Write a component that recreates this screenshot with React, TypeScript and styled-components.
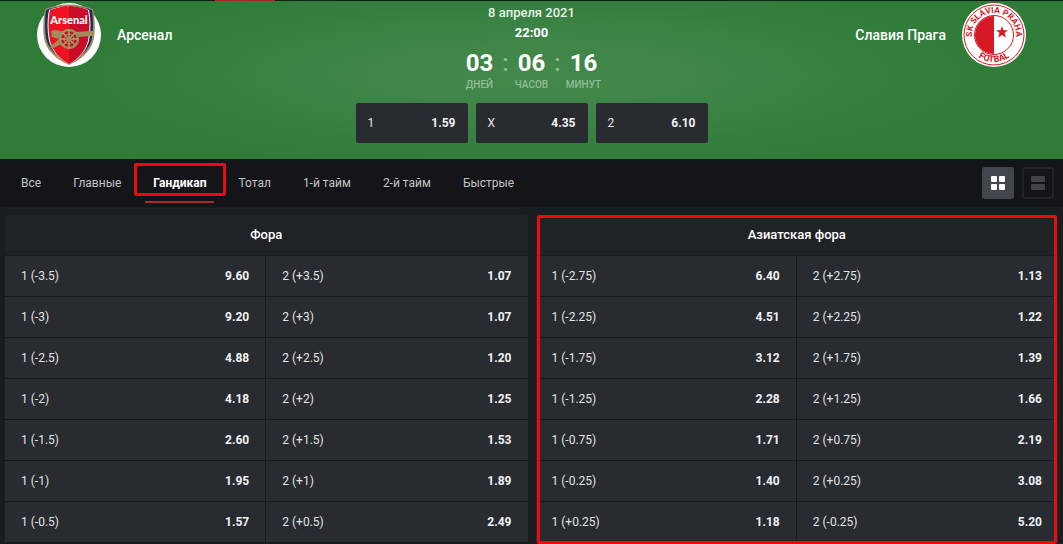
import React from "react";
import styled, { createGlobalStyle } from "styled-components";

const GlobalStyle = createGlobalStyle`
  *, *::before, *::after { box-sizing: border-box; }
  body {
    margin: 0;
    background: #1a1d20;
    color: #fff;
    font-family: Roboto, "Noto Sans", sans-serif;
    font-size: 13px;
    line-height: 20px;
  }
  button { font: inherit; color: inherit; cursor: pointer; border: 0; padding: 0; }
`;

const Page = styled.div`
  min-height: 100vh;
  overflow: hidden;
`;

const TopStrip = styled.div`
  height: 1px;
  padding-left: 215px;
  background: #0b2010;
`;

const TopMarker = styled.div`
  width: 60px;
  height: 1px;
  background: #a3282a;
`;

const Hero = styled.header`
  display: grid;
  grid-template-columns: 1fr 352px 1fr;
  height: 158px;
  padding: 0 37px;
  background: radial-gradient(ellipse 46% 62% at 50% 47%, #44894c 0%, #3c8445 45%, #2f7b38 100%);
`;

const Team = styled.div<{ $away?: boolean }>`
  display: flex;
  flex-direction: ${(p) => (p.$away ? "row-reverse" : "row")};
  align-items: center;
  align-self: start;
  gap: 16px;
  padding-top: 2px;
  font-size: 14px;
  font-weight: 500;
`;

const Crest = styled.svg`
  display: block;
  width: 64px;
  height: 64px;
`;

const MatchInfo = styled.div`
  display: flex;
  flex-direction: column;
  align-items: center;
  padding-top: 2px;
  font-weight: 500;
`;

const MatchDate = styled.time`
  color: #e9f3ea;
`;

const MatchTime = styled.time`
  font-weight: 700;
`;

const Countdown = styled.div`
  display: flex;
  margin-top: 6px;
`;

const Unit = styled.div`
  display: flex;
  flex-direction: column;
  align-items: center;
  width: 40px;
`;

const UnitValue = styled.span`
  font-size: 24px;
  line-height: 28px;
  font-weight: 700;
`;

const UnitLabel = styled.span`
  font-size: 10px;
  line-height: 16px;
  color: #92bd97;
`;

const Colon = styled.span`
  width: 12px;
  text-align: center;
  font-size: 24px;
  line-height: 28px;
  color: #92bd97;
`;

const Outcomes = styled.div`
  display: grid;
  grid-template-columns: repeat(3, 1fr);
  gap: 8px;
  width: 100%;
  margin-top: 10px;
`;

const OutcomeButton = styled.button`
  display: flex;
  align-items: center;
  justify-content: space-between;
  height: 40px;
  padding: 0 12px;
  border-radius: 2px;
  background: #282b30;
  font-size: 12px;
`;

const OddName = styled.span`
  font-weight: 400;
  color: #e2e4e6;
`;

const OddValue = styled.span`
  font-weight: 700;
  color: #f1f2f3;
`;

const Toolbar = styled.div`
  display: flex;
  align-items: center;
  justify-content: space-between;
  height: 48px;
  padding: 0 9px 0 13px;
  background: #141519;
`;

const Tabs = styled.nav`
  display: flex;
  align-self: stretch;
  gap: 16px;
`;

const Tab = styled.button<{ $active?: boolean }>`
  position: relative;
  padding: 6px 8px 0;
  background: none;
  border-bottom: 2px solid ${(p) => (p.$active ? "#b0282f" : "transparent")};
  margin-bottom: 4px;
  color: ${(p) => (p.$active ? "#fff" : "#c2c4c6")};
  font-size: 12px;
  font-weight: ${(p) => (p.$active ? 700 : 400)};
`;

const Highlight = styled.span`
  position: absolute;
  z-index: 1;
  border: 3px solid #ea0a0f;
  border-radius: 2px;
  pointer-events: none;
`;

const TabHighlight = styled(Highlight)`
  inset: 4px -12px 5px -11px;
`;

const PanelHighlight = styled(Highlight)`
  inset: 0 1px -2px 1px;
`;

const Views = styled.div`
  display: flex;
  gap: 8px;
`;

const ViewButton = styled.button<{ $active?: boolean }>`
  display: grid;
  place-items: center;
  width: 32px;
  height: 32px;
  border: 2px solid ${(p) => (p.$active ? "#42474e" : "#202327")};
  border-radius: 3px;
  background: ${(p) => (p.$active ? "#42474e" : "transparent")};
  color: ${(p) => (p.$active ? "#fff" : "#3f444a")};
`;

const Markets = styled.main`
  display: grid;
  grid-template-columns: 1fr 1fr;
  gap: 8px;
  padding: 8px 5px 0;
`;

const Panel = styled.section`
  position: relative;
  border-radius: 4px 4px 0 0;
  background: #202326;
`;

const OddsTable = styled.table`
  width: 100%;
  table-layout: fixed;
  border-collapse: separate;
  border-spacing: 0;
`;

const MarketTitle = styled.th`
  height: 40px;
  padding: 0;
  font-size: 13px;
  font-weight: 500;
  text-align: center;
`;

const OddCell = styled.td`
  height: 41px;
  padding: 0;
  border-top: 1px solid #191b1e;
  background: #282b2f;

  &:first-child { border-right: 1px solid #191b1e; }
`;

const OddButton = styled.button`
  display: flex;
  align-items: center;
  justify-content: space-between;
  width: 100%;
  height: 40px;
  padding: 0 16px;
  background: none;
  font-size: 12px;
`;

const ArsenalCrest = () => (
  <Crest viewBox="0 0 64 64" role="img" aria-label="Arsenal">
    <circle cx="32" cy="32" r="32" fill="#fff" />
    <path d="M8 6Q31-3 56 6Q59 21 57 35Q54 52 32 62Q10 52 7 35Q5 21 8 6Z" fill="#a38b5b" />
    <path d="M9 7Q31-1 55 7Q57 22 55 35Q52 50 32 60Q12 50 9 35Q7 21 9 7Z" fill="#17305f" />
    <path d="M12 7Q32-1 52 7Q55 22 52 38Q48 53 32 61Q16 53 12 38Q9 22 12 7Z" fill="#fff" />
    <path d="M13 7Q32 1 32 4V61Q17 53 13 38Q10 22 13 7Z" fill="#ed1220" />
    <path d="M32 3Q41 3 51 7Q54 22 51 38Q47 53 32 61Z" fill="#c90d28" />
    <text x="32" y="21" textAnchor="middle" fontFamily="Lato" fontWeight="900" fontSize="11" fill="#fff">Arsenal</text>
    <path d="M14 28Q18 26 23 28L36 29L55 28L57 27V34L55 33L40 34L24 41L15 46L13 44L22 36L15 34Z" fill="#a38b5b" />
    <circle cx="32" cy="36" r="9" fill="#c11426" stroke="#a38b5b" strokeWidth="2.4" />
    <circle cx="32" cy="36" r="5" fill="none" stroke="#a38b5b" strokeWidth="1" />
    <path d="M32 27V45M23 36H41M26 30L38 42M38 30L26 42" stroke="#b5a077" strokeWidth="1.4" />
    <circle cx="32" cy="36" r="2.3" fill="#a38b5b" />
  </Crest>
);

const SlaviaCrest = () => (
  <Crest viewBox="0 0 64 64" role="img" aria-label="SK Slavia Praha Fotbal">
    <defs>
      <path id="slavia-top" d="M15.9 47A22 22 0 1 1 48.1 47" />
      <path id="slavia-bottom" d="M8.9 46A27 27 0 0 0 55.1 46" />
    </defs>
    <circle cx="32" cy="32" r="32" fill="#fff" />
    <circle cx="32" cy="32" r="30" fill="none" stroke="#d51a25" strokeWidth="1" />
    <circle cx="32" cy="32" r="19.5" fill="#fff" stroke="#d51a25" strokeWidth="1" />
    <path d="M32 13A19 19 0 0 0 32 51Z" fill="#d51a25" />
    <path d="M40 23L41.5 27.2L46 27.2L42.5 30L43.8 34.5L40 32L36.2 34.5L37.5 30L34 27.2L38.5 27.2Z" fill="#d51a25" />
    <g fontFamily="Roboto" fontWeight="700" fill="#d51a25" textAnchor="middle">
      <text fontSize="8.5"><textPath href="#slavia-top" startOffset="50%">SK SLAVIA PRAHA</textPath></text>
      <text fontSize="9"><textPath href="#slavia-bottom" startOffset="50%">FOTBAL</textPath></text>
    </g>
  </Crest>
);

type Row = [string, string, string, string];

const handicap: Row[] = [
  ["1 (-3.5)", "9.60", "2 (+3.5)", "1.07"],
  ["1 (-3)", "9.20", "2 (+3)", "1.07"],
  ["1 (-2.5)", "4.88", "2 (+2.5)", "1.20"],
  ["1 (-2)", "4.18", "2 (+2)", "1.25"],
  ["1 (-1.5)", "2.60", "2 (+1.5)", "1.53"],
  ["1 (-1)", "1.95", "2 (+1)", "1.89"],
  ["1 (-0.5)", "1.57", "2 (+0.5)", "2.49"],
];

const asian: Row[] = [
  ["1 (-2.75)", "6.40", "2 (+2.75)", "1.13"],
  ["1 (-2.25)", "4.51", "2 (+2.25)", "1.22"],
  ["1 (-1.75)", "3.12", "2 (+1.75)", "1.39"],
  ["1 (-1.25)", "2.28", "2 (+1.25)", "1.66"],
  ["1 (-0.75)", "1.71", "2 (+0.75)", "2.19"],
  ["1 (-0.25)", "1.40", "2 (+0.25)", "3.08"],
  ["1 (+0.25)", "1.18", "2 (-0.25)", "5.20"],
];

const Odd = ({ name, value }: { name: string; value: string }) => (
  <OddCell>
    <OddButton type="button">
      <OddName>{name}</OddName>
      <OddValue>{value}</OddValue>
    </OddButton>
  </OddCell>
);

const Market = ({ title, rows, highlighted }: { title: string; rows: Row[]; highlighted?: boolean }) => (
  <Panel>
    <OddsTable>
      <thead>
        <tr><MarketTitle colSpan={2}>{title}</MarketTitle></tr>
      </thead>
      <tbody>
        {rows.map(([home, homeOdd, away, awayOdd]) => (
          <tr key={home}>
            <Odd name={home} value={homeOdd} />
            <Odd name={away} value={awayOdd} />
          </tr>
        ))}
      </tbody>
    </OddsTable>
    {highlighted && <PanelHighlight />}
  </Panel>
);

const tabs = ["Все", "Главные", "Гандикап", "Тотал", "1-й тайм", "2-й тайм", "Быстрые"];
const units = [["03", "ДНЕЙ"], ["06", "ЧАСОВ"], ["16", "МИНУТ"]];
const outcomes = [["1", "1.59"], ["X", "4.35"], ["2", "6.10"]];

export default function App() {
  return (
    <Page>
      <GlobalStyle />
      <TopStrip><TopMarker /></TopStrip>
      <Hero>
        <Team><ArsenalCrest /><span>Арсенал</span></Team>
        <MatchInfo>
          <MatchDate dateTime="2021-04-08">8 апреля 2021</MatchDate>
          <MatchTime dateTime="22:00">22:00</MatchTime>
          <Countdown>
            {units.map(([value, label], i) => (
              <React.Fragment key={label}>
                {i > 0 && <Colon>:</Colon>}
                <Unit>
                  <UnitValue>{value}</UnitValue>
                  <UnitLabel>{label}</UnitLabel>
                </Unit>
              </React.Fragment>
            ))}
          </Countdown>
          <Outcomes>
            {outcomes.map(([name, value]) => (
              <OutcomeButton key={name} type="button">
                <OddName>{name}</OddName>
                <OddValue>{value}</OddValue>
              </OutcomeButton>
            ))}
          </Outcomes>
        </MatchInfo>
        <Team $away><SlaviaCrest /><span>Славия Прага</span></Team>
      </Hero>
      <Toolbar>
        <Tabs>
          {tabs.map((name) => {
            const active = name === "Гандикап";
            return (
              <Tab key={name} type="button" $active={active}>
                {name}
                {active && <TabHighlight />}
              </Tab>
            );
          })}
        </Tabs>
        <Views>
          <ViewButton type="button" $active aria-label="Две колонки">
            <svg width="14" height="14" fill="currentColor">
              <rect width="6" height="6" rx="1" />
              <rect x="8" width="6" height="6" rx="1" />
              <rect y="8" width="6" height="6" rx="1" />
              <rect x="8" y="8" width="6" height="6" rx="1" />
            </svg>
          </ViewButton>
          <ViewButton type="button" aria-label="Одна колонка">
            <svg width="14" height="14" fill="currentColor">
              <rect width="14" height="6" rx="1" />
              <rect y="8" width="14" height="6" rx="1" />
            </svg>
          </ViewButton>
        </Views>
      </Toolbar>
      <Markets>
        <Market title="Фора" rows={handicap} />
        <Market title="Азиатская фора" rows={asian} highlighted />
      </Markets>
    </Page>
  );
}
